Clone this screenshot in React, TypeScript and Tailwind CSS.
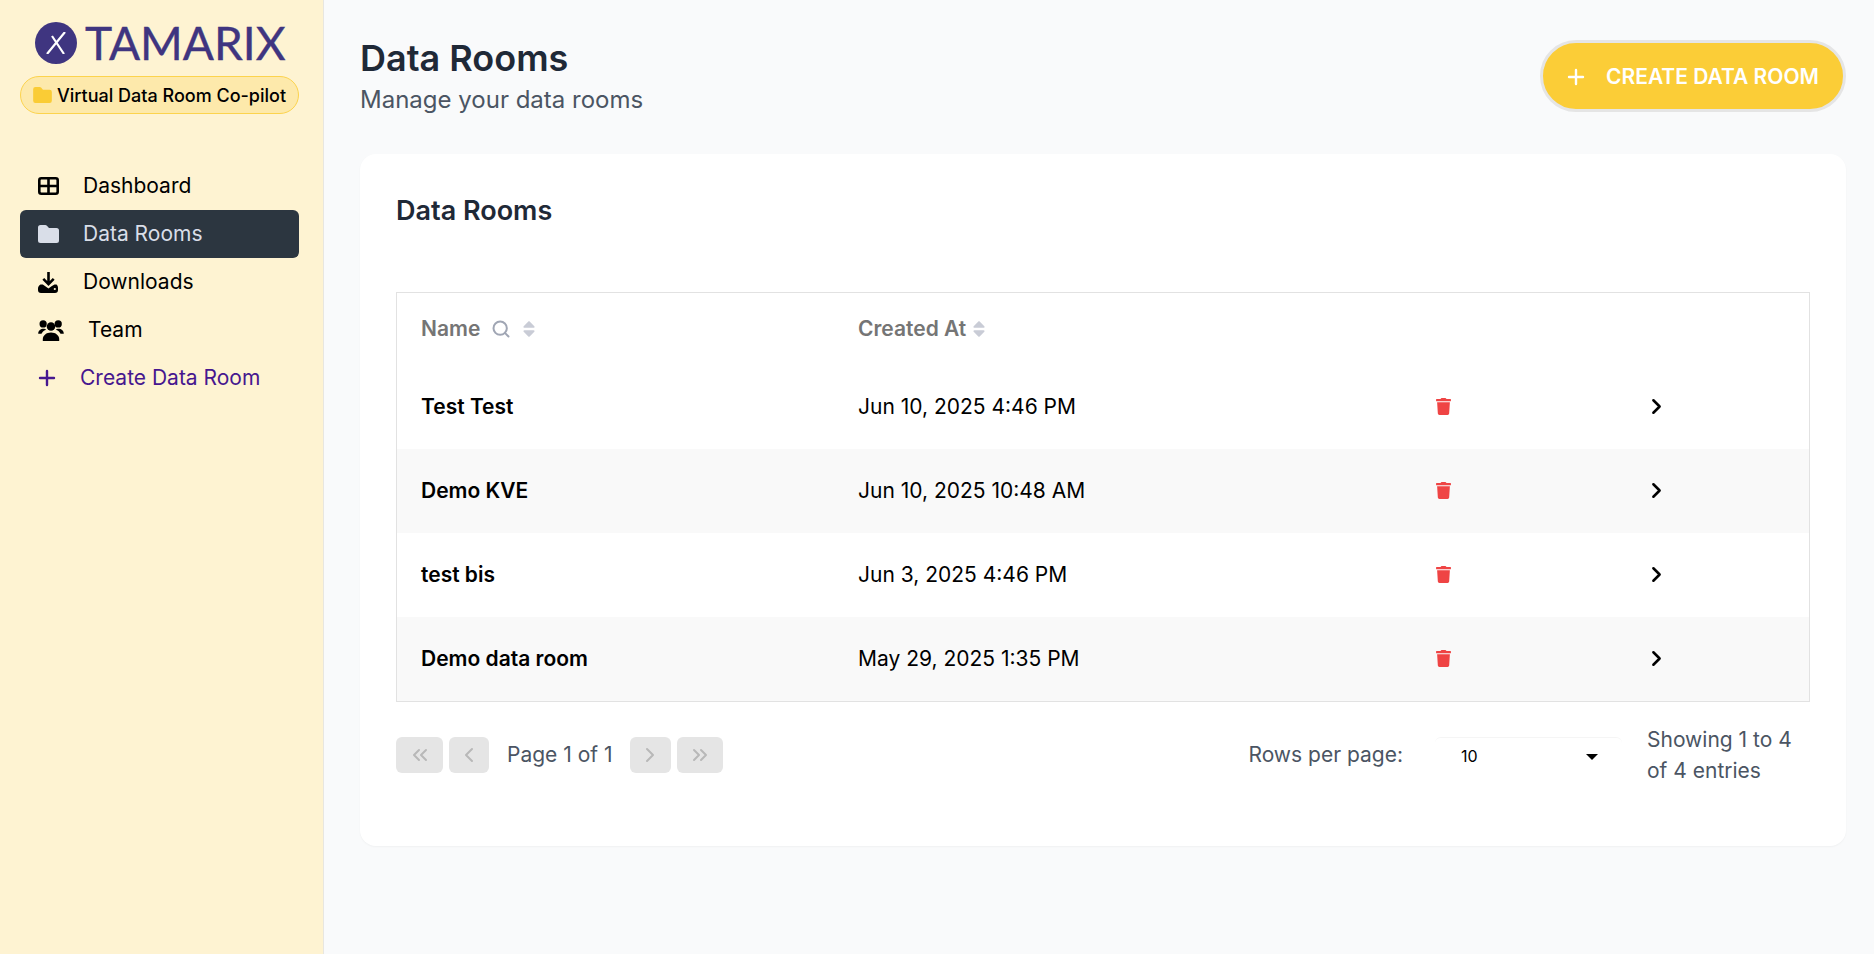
import React from "react"
import { FaSort, FaTrash } from "react-icons/fa"
import { ChevronLeft, ChevronRight, ChevronsLeft, ChevronsRight, Plus, Search } from "lucide-react"

const rows = [
  { name: "Test Test", created: "Jun 10, 2025 4:46 PM" },
  { name: "Demo KVE", created: "Jun 10, 2025 10:48 AM" },
  { name: "test bis", created: "Jun 3, 2025 4:46 PM" },
  { name: "Demo data room", created: "May 29, 2025 1:35 PM" },
]

function GridIcon() {
  return (
    <svg width="21" height="18" viewBox="0 0 21 18" fill="none" stroke="currentColor" strokeWidth="2.6">
      <rect x="1.3" y="1.3" width="18.4" height="15.4" rx="2" />
      <path d="M10.5 1.3v15.4M1.3 9h18.4" />
    </svg>
  )
}

function FolderIcon({ className }: { className?: string }) {
  return (
    <svg width="21" height="18" viewBox="0 0 21 18" fill="currentColor" className={className}>
      <path d="M0 2.5A2.5 2.5 0 0 1 2.5 0h4.8c.6 0 1.2.2 1.6.7L11 3h7.5A2.5 2.5 0 0 1 21 5.500v10a2.500 2.500 0 0 1-2.500 2.500h-16A2.500 2.500 0 0 1 0 15.500z" />
    </svg>
  )
}

function DownloadIcon() {
  return (
    <svg width="21" height="21" viewBox="0 0 21 21" fill="currentColor">
      <path d="M9.200 0h2.600v9l3-3 1.800 1.800-6.100 6.100-6.100-6.100L6.200 6l3 3z" />
      <path d="M2.500 12.500h2.300l5.700 4 3-2.200 3-1.800h2c1 .9 1.500 2.200 1.500 3.600V18a3 3 0 0 1-3 3H3a3 3 0 0 1-3-3v-1.500c0-1.600 1-3.200 2.500-4z" />
      <circle cx="16.800" cy="17" r="1.100" fill="#fef3d2" />
    </svg>
  )
}

function TeamIcon() {
  return (
    <svg width="26" height="21" viewBox="0 0 78 64" fill="currentColor">
      <circle cx="15" cy="12" r="11" />
      <circle cx="61" cy="12" r="11" />
      <circle cx="39" cy="20" r="13" />
      <path d="M14 64v-6c0-11 11-20 25-20s25 9 25 20v6z" />
      <path d="M0 42C0 32 8 27 16 27c4 0 6 1 8 3-8 3-12 8-14 12z" />
      <path d="M78 42c0-10-8-15-16-15-4 0-6 1-8 3 8 3 12 8 14 12z" />
    </svg>
  )
}

function Logo() {
  return (
    <div className="flex items-center h-[46px] ml-[35px] mt-5">
      <div className="w-[42px] h-[42px] rounded-full bg-[#3f3580] flex items-center justify-center shrink-0">
        <svg width="20" height="22" viewBox="0 0 20 22" fill="none" stroke="white" strokeWidth="2.2">
          <path d="M1 22L19 0M6 4l12 18" />
        </svg>
      </div>
      <span className="ml-2 font-['Lato',sans-serif] text-[46px] leading-none text-[#3f3580] [-webkit-text-stroke:0.4px_#3f3580]">TAMARIX</span>
    </div>
  )
}

function PageButton({ width, children }: { width: string; children: React.ReactNode }) {
  return (
    <div className={`${width} h-9 rounded-md bg-[#e5e5e5] text-[#b8b8b8] flex items-center justify-center`}>
      {children}
    </div>
  )
}

export default function App() {
  return (
    <div className="flex h-[954px] w-[1874px] overflow-hidden bg-[#f9fafb] font-['Inter',sans-serif] text-[#1f2937]">
      {/* Sidebar */}
      <aside className="w-[324px] shrink-0 bg-[#fef3d2] border-r border-[#e8e6e0] flex flex-col">
        <Logo />
        <div className="ml-5 w-[279px] mt-[10px] h-[38px] rounded-full bg-[#fde9ab] border border-[#fcd34d] flex items-center pl-3 gap-[5px] text-black text-[18px] font-medium">
          <FolderIcon className="text-[#facc35] w-[19px] h-[16px]" />
          <span>Virtual Data Room Co-pilot</span>
        </div>

        <nav className="mt-[48px] ml-5 w-[279px] flex flex-col text-[21px]">
          <a className="h-12 flex items-center pl-[18px] text-black">
            <GridIcon />
            <span className="ml-[24px]">Dashboard</span>
          </a>
          <a className="h-12 flex items-center pl-[18px] rounded-md bg-[#2c3640] text-[#d9dee8]">
            <FolderIcon />
            <span className="ml-[24px]">Data Rooms</span>
          </a>
          <a className="h-12 flex items-center pl-[18px] text-black">
            <DownloadIcon />
            <span className="ml-[24px]">Downloads</span>
          </a>
          <a className="h-12 flex items-center pl-[18px] text-black">
            <TeamIcon />
            <span className="ml-[24px]">Team</span>
          </a>
          <a className="h-12 flex items-center pl-[15px] text-[#46178f]">
            <Plus size={24} strokeWidth={2.4} />
            <span className="ml-[21px]">Create Data Room</span>
          </a>
        </nav>
      </aside>

      {/* Main */}
      <main className="flex-1 pl-[36px] pr-[28px]">
        <header className="flex items-start justify-between h-[154px]">
          <div className="mt-[36px]">
            <h1 className="text-[36px] leading-[44px] font-semibold text-[#1f2937]">Data Rooms</h1>
            <p className="mt-[4px] text-[24px] leading-[32px] text-[#4b5563]">Manage your data rooms</p>
          </div>
          <button className="mt-[40px] w-[306px] h-[72px] rounded-full bg-[#fbcd37] border-[3px] border-[#e5e5e5] flex items-center pl-[21px] pt-[2px] text-white text-[21px] font-semibold">
            <Plus size={24} strokeWidth={2.4} />
            <span className="ml-[18px]">CREATE DATA ROOM</span>
          </button>
        </header>

        <section className="h-[692px] rounded-2xl bg-white shadow-[0_1px_2px_rgba(0,0,0,0.04)] px-[36px]">
          <h2 className="pt-[39px] text-[27px] leading-[36px] font-semibold text-[#1f2937]">Data Rooms</h2>

          <div className="mt-[63px] border border-[#e2e2e2]">
            <div className="flex items-center h-[72px] text-[21px] font-semibold text-[#757575]">
              <div className="w-[461px] pl-6 flex items-center">
                <span>Name</span>
                <Search size={20} strokeWidth={2.4} className="ml-[11px] text-[#a0a6b4]" />
                <FaSort className="ml-[8px] text-[#c9ccd6] text-[20px]" />
              </div>
              <div className="flex items-center">
                <span>Created At</span>
                <FaSort className="ml-[3px] text-[#c9ccd6] text-[20px]" />
              </div>
            </div>
            {rows.map((row, i) => (
              <div key={row.name} className={`flex items-center h-[84px] text-[21px] text-black ${i % 2 === 1 ? "bg-[#f9f9f9]" : "bg-white"}`}>
                <div className="w-[461px] pl-6 font-semibold">{row.name}</div>
                <div className="w-[577px]">{row.created}</div>
                <div className="w-[209px] -mt-[2px]">
                  <FaTrash className="text-[#ef4444] text-[17px]" />
                </div>
                <ChevronRight size={25} strokeWidth={2.4} className="text-black -mt-[2px]" />
              </div>
            ))}
          </div>

          <div className="mt-[22px] flex items-center">
            <div className="flex items-center gap-[6px]">
              <PageButton width="w-[47px]"><ChevronsLeft size={24} /></PageButton>
              <PageButton width="w-10"><ChevronLeft size={24} /></PageButton>
              <span className="ml-3 mr-[11px] text-[21px] text-[#4b5563]">Page 1 of 1</span>
              <PageButton width="w-[41px]"><ChevronRight size={24} /></PageButton>
              <PageButton width="w-[46px]"><ChevronsRight size={24} /></PageButton>
            </div>
            <div className="ml-auto flex items-center">
              <span className="text-[21px] text-[#4b5563]">Rows per page:</span>
              <div className="ml-[32px] w-[187px] h-9 rounded-md border-t border-[#f5f5f5] bg-white flex items-center justify-between pl-[26px] pr-[24px] text-[16px] text-black">
                <span>10</span>
                <span className="mt-[2px] w-0 h-0 border-x-[6px] border-x-transparent border-t-[6px] border-t-black" />
              </div>
            </div>
            <div className="ml-[25px] w-[163px] text-[21px] leading-[31px] text-[#4b5563]">
              Showing 1 to 4 of 4 entries
            </div>
          </div>
        </section>
      </main>
    </div>
  )
}
